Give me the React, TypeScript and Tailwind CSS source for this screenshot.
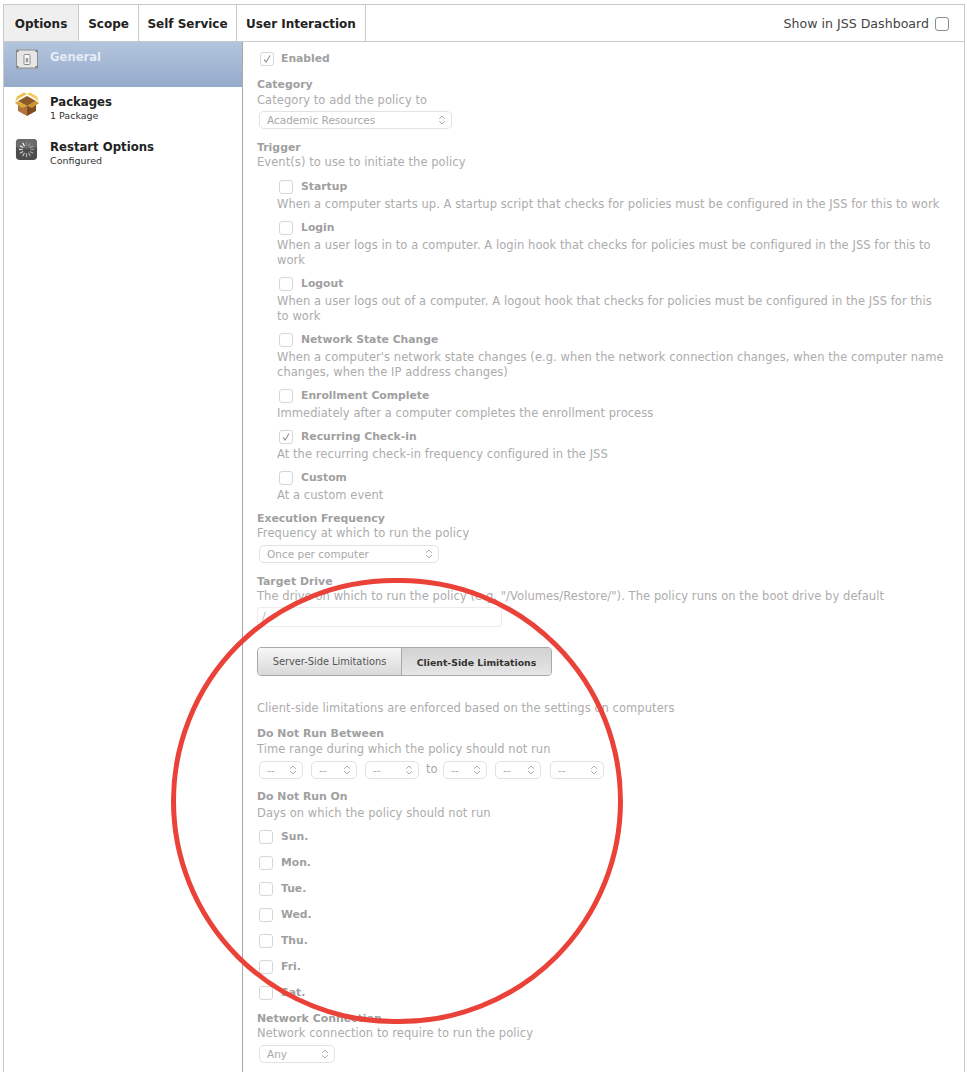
import { ChevronsUpDown } from "lucide-react";

const triggers = [
  { label: "Startup", top: "mt-[8px]", lines: ["When a computer starts up. A startup script that checks for policies must be configured in the JSS for this to work"] },
  { label: "Login", top: "mt-[7px]", lines: ["When a user logs in to a computer. A login hook that checks for policies must be configured in the JSS for this to", "work"] },
  { label: "Logout", top: "mt-[7px]", lines: ["When a user logs out of a computer. A logout hook that checks for policies must be configured in the JSS for this", "to work"] },
  { label: "Network State Change", top: "mt-[7px]", lines: ["When a computer's network state changes (e.g. when the network connection changes, when the computer name", "changes, when the IP address changes)"] },
  { label: "Enrollment Complete", top: "mt-[7px]", lines: ["Immediately after a computer completes the enrollment process"] },
  { label: "Recurring Check-in", top: "mt-[7px]", checked: true, lines: ["At the recurring check-in frequency configured in the JSS"] },
  { label: "Custom", top: "mt-[7px]", lines: ["At a custom event"] },
];

const days = ["Sun.", "Mon.", "Tue.", "Wed.", "Thu.", "Fri.", "Sat."];

function Box({ checked, dark }: { checked?: boolean; dark?: boolean }) {
  return (
    <span className={`flex h-[14px] w-[14px] shrink-0 items-center justify-center rounded-[3px] border bg-white ${dark ? "border-[#8d8d8d]" : "border-[#d6d6d6]"}`}>
      {checked && (
        <svg viewBox="0 0 14 14" className="h-[14px] w-[14px]" fill="none" stroke="#8f8f8f" strokeWidth="1.2">
          <path d="M3.5 7.5 L6 10.5 L10.5 3" />
        </svg>
      )}
    </span>
  );
}

function Select({ label, width }: { label: string; width: string }) {
  return (
    <div className={`flex h-[18px] items-center justify-between rounded-[5px] border border-[#e2e2e2] bg-white pl-[7px] pr-[3px] text-[#a8a8a8] ${width}`}>
      <span className="text-[10.5px] leading-none">{label}</span>
      <ChevronsUpDown className="h-[12px] w-[12px] text-[#8f8f8f]" strokeWidth={1.5} />
    </div>
  );
}

function Title({ children }: { children: string }) {
  return <p className="text-[10.9px] font-bold leading-[15px] text-[#a0a0a0]">{children}</p>;
}

function Hint({ children }: { children: string }) {
  return <p className="text-[11.5px] leading-[15px] tracking-[0.065px] text-[#acacac]">{children}</p>;
}

function CheckRow({ label, checked }: { label: string; checked?: boolean }) {
  return (
    <div className="flex h-[19px] items-start gap-[8px] pl-[2px] pt-[2px]">
      <Box checked={checked} />
      <span className="text-[10.8px] font-bold leading-[14px] text-[#a0a0a0]">{label}</span>
    </div>
  );
}

function SwitchIcon() {
  return (
    <svg viewBox="0 0 24 24" className="h-[24px] w-[24px]">
      <rect x="1.5" y="3" width="21" height="18" fill="#e6e6e6" stroke="#8c8c8c" />
      <rect x="2" y="3.5" width="1.5" height="1.5" fill="#666" />
      <rect x="20.5" y="3.5" width="1.5" height="1.5" fill="#666" />
      <rect x="2" y="19" width="1.5" height="1.5" fill="#666" />
      <rect x="20.5" y="19" width="1.5" height="1.5" fill="#666" />
      <rect x="9" y="7.5" width="6" height="10" rx="1" fill="#fafafa" stroke="#8a8a8a" />
      <rect x="10.8" y="11" width="2.4" height="4.5" fill="#9a9a9a" />
    </svg>
  );
}

function BoxIcon() {
  return (
    <svg viewBox="0 0 26 26" className="h-[26px] w-[26px]">
      <path d="M4 11 L13 15 L13 25 L4 20 Z" fill="#b1743a" />
      <path d="M22 11 L13 15 L13 25 L22 20 Z" fill="#7f4a1f" />
      <path d="M4 10 L13 5 L22 10 L13 15 Z" fill="#8b5a26" />
      <path d="M1 11 L4 8 L13 3 L10 1.5 L3 5.5 Z" fill="#e9bf47" />
      <path d="M25 11 L22 8 L13 3 L16 1.5 L23 5.5 Z" fill="#f0cc55" />
      <path d="M4 10 L13 15 L8 17 L1 12 Z" fill="#d9a93a" />
      <path d="M22 10 L13 15 L18 17 L25 12 Z" fill="#c9952f" />
    </svg>
  );
}

function SpinnerIcon() {
  const spokes = [0, 30, 60, 90, 120, 150, 180, 210, 240, 270, 300, 330];
  return (
    <svg viewBox="0 0 24 24" className="h-[23px] w-[23px]">
      <rect x="1" y="1" width="22" height="22" rx="4" fill="#4c4c4c" />
      <rect x="1" y="1" width="22" height="10" rx="4" fill="#6a6a6a" />
      {spokes.map((a, i) => (
        <rect key={a} x="11.4" y="4" width="1.2" height="4" fill="#fff" opacity={0.25 + (i / 12) * 0.75} transform={`rotate(${a} 12 12)`} />
      ))}
    </svg>
  );
}

export default function App() {
  return (
    <main className="relative h-[1072px] w-[967px] overflow-hidden bg-white pl-[3px] pr-[2px] pt-[4px] font-['DejaVu_Sans',sans-serif]">
      <div className="flex h-[1068px] flex-col border-x border-t border-[#c9c9c9]">
        <header className="flex h-[37px] shrink-0 items-stretch border-b border-[#c9c9c9]">
          {[
            { label: "Options", w: "w-[75px]", active: true },
            { label: "Scope", w: "w-[60px]" },
            { label: "Self Service", w: "w-[98px]" },
            { label: "User Interaction", w: "w-[129px]" },
          ].map((t) => (
            <div key={t.label} className={`flex items-center justify-center border-r border-[#c9c9c9] pt-[1px] text-[12px] font-bold text-[#222] ${t.w} ${t.active ? "bg-[#efefef]" : "bg-white"}`}>
              {t.label}
            </div>
          ))}
          <div className="ml-auto flex items-center gap-[6px] pr-[15px] pt-[2px]">
            <span className="text-[12.6px] text-[#444]">Show in JSS Dashboard</span>
            <Box dark />
          </div>
        </header>

        <div className="flex min-h-0 flex-1">
          <aside className="w-[239px] shrink-0 border-r border-[#a8a8a8]">
            <div className="flex h-[45px] gap-[11px] bg-gradient-to-b from-[#b3c4dd] to-[#95abcb] pl-[11px] pt-[5px]">
              <SwitchIcon />
              <span className="pt-[2px] text-[11.6px] font-bold leading-[17px] text-[#e6ecf5]">General</span>
            </div>
            <div className="mt-[4px] flex gap-[10px] pl-[10px]">
              <BoxIcon />
              <div className="pt-[4px]">
                <p className="text-[11.7px] font-bold leading-[15px] text-[#222]">Packages</p>
                <p className="text-[9.5px] leading-[12px] text-[#333]">1 Package</p>
              </div>
            </div>
            <div className="mt-[16px] flex gap-[12px] pl-[11px]">
              <SpinnerIcon />
              <div className="pt-[2px]">
                <p className="text-[11.7px] font-bold leading-[15px] text-[#222]">Restart Options</p>
                <p className="text-[9.5px] leading-[12px] text-[#333]">Configured</p>
              </div>
            </div>
          </aside>

          <section className="min-w-0 flex-1 pl-[14px] pt-[9px]">
            <div className="flex h-[16px] items-center gap-[7px] pl-[3px]">
              <Box checked />
              <span className="text-[10.8px] font-bold text-[#a0a0a0]">Enabled</span>
            </div>
            <div className="mt-[10px]">
              <Title>Category</Title>
              <div className="mt-[1px]"><Hint>Category to add the policy to</Hint></div>
            </div>
            <div className="ml-[2px] mt-[3px]">
              <Select label="Academic Resources" width="w-[193px]" />
            </div>
            <div className="mt-[11px]">
              <Title>Trigger</Title>
              <Hint>Event(s) to use to initiate the policy</Hint>
            </div>
            {triggers.map((t) => (
              <div key={t.label} className={`${t.top} pl-[20px]`}>
                <CheckRow label={t.label} checked={t.checked} />
                {t.lines.map((line) => (
                  <Hint key={line}>{line}</Hint>
                ))}
              </div>
            ))}
            <div className="mt-[8px]">
              <Title>Execution Frequency</Title>
              <Hint>Frequency at which to run the policy</Hint>
            </div>
            <div className="ml-[2px] mt-[4px]">
              <Select label="Once per computer" width="w-[180px]" />
            </div>
            <div className="mt-[11px]">
              <Title>Target Drive</Title>
              <Hint>The drive on which to run the policy (e.g. "/Volumes/Restore/"). The policy runs on the boot drive by default</Hint>
            </div>
            <div className="mt-[3px] flex h-[20px] w-[245px] items-center rounded-[3px] border border-[#ececec] pl-[4px] text-[11px] text-[#b5b5b5]">/</div>

            <div className="mt-[20px] flex h-[29px] w-[295px] overflow-hidden rounded-[4px] border border-[#a9a9a9]">
              <div className="flex w-[144px] items-center justify-center border-r border-[#a9a9a9] bg-gradient-to-b from-[#f7f7f7] to-[#d9d9d9] pt-[2px] text-[9.8px] text-[#555]">Server-Side Limitations</div>
              <div className="flex flex-1 items-center justify-center bg-gradient-to-b from-[#d2d2d2] to-[#e6e6e6] pt-[2px] text-[9.3px] font-bold text-[#333]">Client-Side Limitations</div>
            </div>

            <div className="mt-[25px]">
              <Hint>Client-side limitations are enforced based on the settings on computers</Hint>
            </div>
            <div className="mt-[10px]">
              <Title>Do Not Run Between</Title>
              <div className="mt-[1px]"><Hint>Time range during which the policy should not run</Hint></div>
            </div>
            <div className="ml-[2px] mt-[4px] flex items-center">
              <Select label="--" width="w-[44px]" />
              <div className="ml-[8px]"><Select label="--" width="w-[46px]" /></div>
              <div className="ml-[8px]"><Select label="--" width="w-[54px]" /></div>
              <span className="ml-[7px] w-[17px] text-[11.5px] text-[#a8a8a8]">to</span>
              <Select label="--" width="w-[44px]" />
              <div className="ml-[8px]"><Select label="--" width="w-[46px]" /></div>
              <div className="ml-[9px]"><Select label="--" width="w-[54px]" /></div>
            </div>
            <div className="mt-[10px]">
              <Title>Do Not Run On</Title>
              <div className="mt-[2px]"><Hint>Days on which the policy should not run</Hint></div>
            </div>
            <div className="mt-[7px] flex flex-col gap-[7px]">
              {days.map((d) => (
                <CheckRow key={d} label={d} />
              ))}
            </div>
            <div className="mt-[8px]">
              <Title>Network Connection</Title>
              <Hint>Network connection to require to run the policy</Hint>
            </div>
            <div className="ml-[2px] mt-[4px]">
              <Select label="Any" width="w-[76px]" />
            </div>
          </section>
        </div>
      </div>

      <div className="pointer-events-none absolute left-[171px] top-[578px] h-[446px] w-[452px] rounded-full border-[5px] border-[#ea4238]" />
    </main>
  );
}
